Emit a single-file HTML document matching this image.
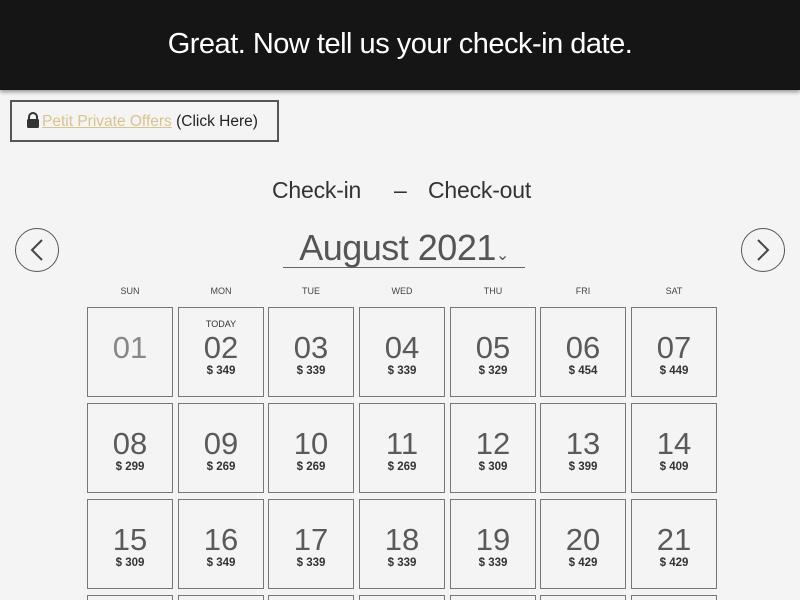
<!DOCTYPE html>
<html><head><meta charset="utf-8"><style>
*{margin:0;padding:0;box-sizing:border-box}
html,body{width:800px;height:600px;overflow:hidden}
body{background:#f4f4f4;font-family:"Liberation Sans",sans-serif;position:relative;color:#444}
.hdr{position:absolute;left:0;top:0;width:800px;height:90px;background:#151515;box-shadow:0 2px 4px rgba(0,0,0,.4)}
.hdr div{position:absolute;left:0;width:800px;top:28px;text-align:center;color:#fff;font-size:29px;letter-spacing:-0.5px}
.offer{position:absolute;left:10px;top:100px;width:269px;height:42px;border:2px solid #555;font-size:15.5px;line-height:40px;padding-left:30px;color:#222;white-space:nowrap}
.offer a{color:#d9c48f;text-decoration:underline}
.lock{position:absolute;left:14px;top:10px}
.ci{position:absolute;top:177px;font-size:23px;color:#333;letter-spacing:-0.2px}
.circ{position:absolute;top:228px;width:44px;height:44px;border:1px solid #555;border-radius:50%}
.month{position:absolute;left:283px;top:229px;width:242px;height:39px;border-bottom:1px solid #666;text-align:center;font-size:36px;color:#555;line-height:38px;letter-spacing:-0.5px;white-space:nowrap}
.dow{position:absolute;top:286px;width:86px;text-align:center;font-size:9px;color:#444}
.cell{position:absolute;width:86px;height:90px;border:1px solid #777;text-align:center}
.cell .n{position:absolute;left:0;right:0;top:24px;font-size:31px;color:#5a5a5a;line-height:32px}
.cell .p{position:absolute;left:0;right:0;top:57px;font-size:11.5px;color:#333;font-weight:bold}
.cell .t{position:absolute;left:0;right:0;top:11px;font-size:9px;color:#333}
</style></head><body>
<div class="hdr"><div>Great. Now tell us your check-in date.</div></div>
<div class="offer"><svg class="lock" width="14" height="16" viewBox="0 0 14 16"><path d="M3 7V5a4 4 0 0 1 8 0v2" fill="none" stroke="#333" stroke-width="2"/><rect x="1" y="7" width="12" height="9" rx="1.5" fill="#333"/></svg><a>Petit Private Offers</a> (Click Here)</div>
<div class="ci" style="left:272px">Check-in</div>
<div class="ci" style="left:394px">–</div>
<div class="ci" style="left:428px">Check-out</div>
<div class="circ" style="left:15px"><svg width="44" height="44" viewBox="0 0 44 44" style="position:absolute;left:-1px;top:-1px"><path d="M27 12 L17 22 L27 32" fill="none" stroke="#444" stroke-width="2"/></svg></div>
<div class="circ" style="left:741px"><svg width="44" height="44" viewBox="0 0 44 44" style="position:absolute;left:-1px;top:-1px"><path d="M17 12 L27 22 L17 32" fill="none" stroke="#444" stroke-width="2"/></svg></div>
<div class="month">August 2021<span style="font-size:16px">⌄</span></div>
<div id="g"></div>
<script>
var xs=[87,178,268,359,450,540,631],ys=[307,403,499,595];
var d=["SUN","MON","TUE","WED","THU","FRI","SAT"];
var pr=[null,349,339,339,329,454,449,299,269,269,269,309,399,409,309,349,339,339,339,429,429,0,0,0,0,0,0,0];
var h="";
for(var i=0;i<7;i++)h+='<div class="dow" style="left:'+xs[i]+'px">'+d[i]+'</div>';
for(var k=0;k<28;k++){var r=Math.floor(k/7),c=k%7,n=k+1;var s=(n<10?"0":"")+n;
h+='<div class="cell" style="left:'+xs[c]+'px;top:'+ys[r]+'px"><div class="n"'+(k==0?' style="color:#888"':'')+'>'+s+'</div>'+(pr[k]?'<div class="p">$ '+pr[k]+'</div>':'')+(k==1?'<div class="t">TODAY</div>':'')+'</div>';}
document.getElementById("g").innerHTML=h;
</script>
</body></html>
